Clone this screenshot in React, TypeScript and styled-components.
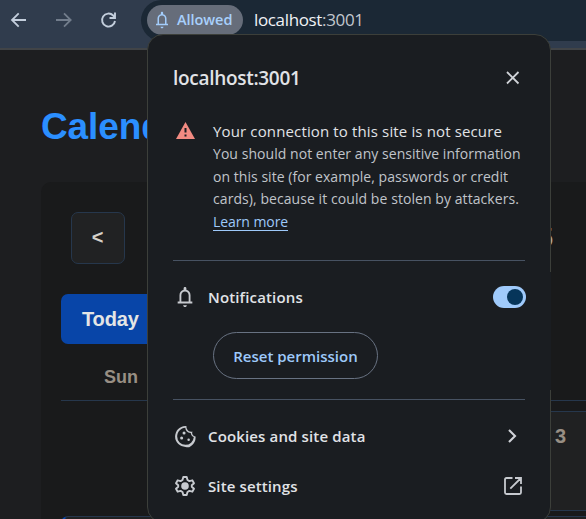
import React from "react";
import styled, { createGlobalStyle } from "styled-components";

const Global = createGlobalStyle`
  * { box-sizing: border-box; }
  body { margin: 0; background: #1d1e20; overflow: hidden; }
`;

const ui = `"Open Sans", "Noto Sans", sans-serif`;
const arial = `"Liberation Sans", Arial, sans-serif`;

const Screen = styled.div`
  position: relative;
  width: 586px;
  height: 519px;
  overflow: hidden;
  background: #1d1e20;
`;

const Toolbar = styled.header`
  display: flex;
  height: 50px;
  background: #303c4d;
  border-bottom: 2px solid #414447;
`;

const NavIcons = styled.div`
  display: flex;
  align-items: center;
  gap: 25px;
  width: 141px;
  height: 39px;
  padding-left: 8px;
`;

const AddressBar = styled.div`
  display: flex;
  align-items: flex-start;
  flex: 1;
  height: 41px;
  padding: 5px 0 0 6px;
  background: #1b2835;
  border-radius: 21px 0 0 21px;
`;

const Chip = styled.div`
  display: flex;
  align-items: center;
  gap: 6px;
  width: 96px;
  height: 30px;
  padding-left: 6px;
  border-radius: 15px;
  background: #666d7a;
  color: #a3cdfb;
`;

const Label = styled.span<{ $size: number; $weight?: number; $spacing?: number; $color?: string }>`
  font-family: ${ui};
  font-size: ${(p) => p.$size}px;
  font-weight: ${(p) => p.$weight ?? 400};
  letter-spacing: ${(p) => p.$spacing ?? 0}px;
  color: ${(p) => p.$color ?? "#e1e3e7"};
  line-height: 24px;
  white-space: nowrap;
`;

const Address = styled(Label)`
  margin: 3px 0 0 11px;
`;

const Port = styled.span`
  color: #c2c7ce;
`;

const Page = styled.main`
  padding: 51px 0 0 41px;
  font-family: ${arial};
`;

const Heading = styled.h1`
  margin: 0;
  height: 81px;
  color: #2b8fff;
  font-size: 37px;
  line-height: 51px;
  letter-spacing: -0.1px;
`;

const Card = styled.section`
  width: 920px;
  height: 600px;
  padding: 30px 20px;
  border-radius: 10px;
  background: #191a1b;
`;

const MonthBar = styled.div`
  display: flex;
  align-items: center;
  justify-content: space-between;
  width: 492px;
  height: 52px;
  padding-left: 10px;
`;

const Previous = styled.button`
  width: 54px;
  height: 52px;
  padding: 0 1px 2px 0;
  border: 1px solid #26374c;
  border-radius: 7px;
  background: #212223;
  color: #d5d1c9;
  font: bold 20px ${arial};
`;

const Month = styled.span`
  color: #aaa69f;
  font-size: 28px;
  font-weight: bold;
`;

const Today = styled.button`
  display: block;
  width: 120px;
  height: 50px;
  margin-top: 30px;
  padding: 0 0 0 21px;
  border: 0;
  border-radius: 7px;
  background: #0845a8;
  color: #e4e5e5;
  font: bold 20px ${arial};
  letter-spacing: -0.15px;
  text-align: left;
`;

const Week = styled.div`
  display: grid;
  grid-template-columns: repeat(7, 116px);
  column-gap: 5px;
`;

const WeekHeader = styled(Week)`
  width: 880px;
  height: 57px;
  margin-bottom: 10px;
  border-bottom: 1px solid #26374c;
`;

const WeekDay = styled.div`
  padding: 22px 0 0 4px;
  color: #988f84;
  font-size: 18px;
  font-weight: bold;
  line-height: 22px;
  text-align: center;
`;

const Day = styled.div<{ $empty?: boolean; $start?: boolean }>`
  height: 100px;
  margin-bottom: 5px;
  padding: 12px 9px;
  border: 1px solid ${(p) => (p.$empty ? "transparent" : "#26374c")};
  ${(p) => p.$start && "border-top-left-radius: 7px; border-left: 3px solid #0845a8;"}
  background: ${(p) => (p.$empty ? "transparent" : "#202122")};
  color: #988f84;
  font-size: 20px;
  font-weight: bold;
  line-height: 24px;
`;

const Popup = styled.aside`
  position: absolute;
  left: 147px;
  top: 34px;
  width: 404px;
  height: 489px;
  padding: 0 25px;
  border: 1px solid #3c3f3a;
  border-radius: 16px;
  background: #1a1d21;

  &::after {
    content: "";
    position: absolute;
    top: 237px;
    right: -1px;
    width: 1px;
    height: 118px;
    background: #1a1d21;
  }
`;

const PopupHeader = styled.div`
  display: flex;
  align-items: center;
  justify-content: space-between;
  height: 86px;
  padding-right: 2px;
`;

const Warning = styled.div`
  display: flex;
  gap: 16px;
  height: 139px;
`;

const WarningIcon = styled.div`
  width: 24px;
  padding: 0 2px;
`;

const WarningText = styled.div`
  display: flex;
  flex-direction: column;
`;

const WarningTitle = styled(Label)`
  height: 22px;
  line-height: 21px;
`;

const BodyLine = styled(Label)`
  height: 22.67px;
  line-height: 22px;
`;

const Link = styled.a`
  align-self: flex-start;
  margin-top: 3px;
  border-bottom: 1px solid #9ec9fa;
  color: #9ec9fa;
  font: 14px/16px ${ui};
  letter-spacing: -0.08px;
  height: 17px;
`;

const Divider = styled.hr`
  height: 1px;
  margin: 0;
  border: 0;
  background: #475262;
`;

const Row = styled.div<{ $height: number }>`
  display: flex;
  align-items: center;
  height: ${(p) => p.$height}px;
`;

const RowIcon = styled.div`
  display: flex;
  justify-content: center;
  width: 25px;
  margin: 0 10.5px 0 -0.5px;
  color: #c7cacf;
`;

const RowEnd = styled.div<{ $inset?: number }>`
  display: flex;
  margin-left: auto;
  margin-right: ${(p) => p.$inset ?? 0}px;
`;

const Switch = styled.div`
  display: flex;
  align-items: center;
  justify-content: flex-end;
  width: 33px;
  height: 22px;
  padding: 3px;
  border-radius: 11px;
  background: #9fcafb;
`;

const Knob = styled.div`
  width: 16px;
  height: 16px;
  border-radius: 8px;
  background: #06355a;
`;

const Reset = styled.button`
  display: flex;
  align-items: center;
  justify-content: center;
  width: 165px;
  height: 47px;
  margin: -1px 0 20px 40px;
  padding: 0;
  border: 1px solid #687282;
  border-radius: 24px;
  background: transparent;
`;

const Bell = ({ size }: { size: number }) => (
  <svg width={size} height={size} viewBox="0 0 24 24" fill="currentColor">
    <path d="M4 19v-2h2v-7c0-2.8 1.7-5.1 4.5-5.8V2.5c0-1.8 3-1.8 3 0v1.7C16.3 4.9 18 7.2 18 10v7h2v2H4zm8 4c-1.1 0-2-.9-2-2h4c0 1.100-.9 2-2 2zM8 17h8v-7c0-2.300-1.700-4-4-4s-4 1.700-4 4v7z" />
  </svg>
);

const Arrow = ({ color, forward }: { color: string; forward?: boolean }) => (
  <svg width="20" height="20" viewBox="0 0 20 20" fill="none" stroke={color} strokeWidth="1.8">
    <path d={forward ? "M3 10h14M11 3.300 17.700 10 11 16.700" : "M18 10H4M10.700 3.300 4 10l6.700 6.700"} />
  </svg>
);

const Reload = () => (
  <svg width="20" height="20" viewBox="0 0 20 20" fill="none" stroke="#c3cedc" strokeWidth="1.900">
    <path d="M17 11a6.500 6.500 0 1 1-1.800-5.500L17 7.500M17 2.500V8h-5.500" />
  </svg>
);

const Close = () => (
  <svg width="20" height="20" viewBox="0 0 20 20" fill="none" stroke="#d0d3d8" strokeWidth="1.800">
    <path d="m4 4 11.500 11.500M15.500 4 4 15.500" />
  </svg>
);

const Triangle = () => (
  <svg width="20" height="20" viewBox="0 0 20 20">
    <path d="M10.500 1 20 18H1z" fill="#f28b82" />
    <path d="M9.500 7h2v4.500h-2zM9.500 13.500h2v2h-2z" fill="#1a1d21" />
  </svg>
);

const Cookie = () => (
  <svg width="25" height="25" viewBox="0 0 24 24" fill="currentColor">
    <path d="M12 22q-2.080 0-3.900-.79a10.100 10.100 0 0 1-3.180-2.140 10.100 10.100 0 0 1-2.130-3.170A9.700 9.700 0 0 1 2 12q0-1.880.73-3.670a10 10 0 0 1 2.030-3.200 10.300 10.300 0 0 1 3.140-2.260A9.400 9.400 0 0 1 11.930 2q.52 0 1.070.05-.2 1.250.2 2.360.4 1.120 1.200 1.860.8.750 1.910 1.040 1.110.3 2.340-.06-.73 1.650.21 3.160.94 1.520 2.790 1.560.02.280.04.510.01.240.010.500 0 2.050-.79 3.860a10.300 10.300 0 0 1-2.140 3.190 10.100 10.100 0 0 1-3.170 2.180A9.600 9.600 0 0 1 12 22zm0-2q3.050 0 5.400-2.100t2.600-5.350a4.400 4.400 0 0 1-2.060-1.560 4.600 4.600 0 0 1-.890-2.440 4.800 4.800 0 0 1-3.950-1.680 5.300 5.300 0 0 1-1.300-3.320C7.400 3.600 4 7.700 4 12q0 3.325 2.340 5.660T12 20z" />
    <circle cx="10.600" cy="8.700" r="1.450" /><circle cx="8.300" cy="13.500" r="1.450" /><circle cx="15" cy="15" r="1.200" />
  </svg>
);

const Gear = () => (
  <svg width="24" height="24" viewBox="0 0 24 24" fill="none" stroke="currentColor" strokeWidth="1.900" strokeLinejoin="round">
    <path d="m10.300 3-.8 3-1.900 1.100-2.900-.8-1.700 2.900L5.200 11.300v1.400L3 14.800l1.700 2.900 2.900-.8L9.500 18l.8 3h3.400l.8-3 1.900-1.100 2.900.8 1.700-2.900-2.200-2.100v-1.400L21 9.200l-1.700-2.900-2.900.8L14.500 6l-.8-3z" />
    <circle cx="12" cy="12" r="3.800" fill="currentColor" stroke="none" />
  </svg>
);

const Chevron = () => (
  <svg width="20" height="20" viewBox="0 0 20 20" fill="none" stroke="#d0d3d8" strokeWidth="2.100">
    <path d="m7 4 6 6-6 6" />
  </svg>
);

const External = () => (
  <svg width="20" height="20" viewBox="0 0 20 20" fill="none" stroke="#c7cacf" strokeWidth="1.800">
    <path d="M9.500 2H3.500Q2 2 2 3.500v13Q2 18 3.500 18h13q1.500 0 1.500-1.500v-6M12 2h6v6M18 2 7.300 12.700" />
  </svg>
);

const lines = [
  { text: "You should not enter any sensitive information", spacing: 0.05 },
  { text: "on this site (for example, passwords or credit", spacing: 0.04 },
  { text: "cards), because it could be stolen by attackers.", spacing: 0.07 },
];

export default function App() {
  return (
    <Screen>
      <Global />
      <Toolbar>
        <NavIcons>
          <Arrow color="#c3cedc" />
          <Arrow color="#727d8c" forward />
          <Reload />
        </NavIcons>
        <AddressBar>
          <Chip>
            <Bell size={18} />
            <Label $size={14.5} $weight={600} $spacing={-0.05} $color="#a8d0fc">Allowed</Label>
          </Chip>
          <Address $size={17} $spacing={-0.35} $color="#f0f2f5">localhost<Port>:3001</Port></Address>
        </AddressBar>
      </Toolbar>
      <Page>
        <Heading>Calendar</Heading>
        <Card>
          <MonthBar>
            <Previous>&lt;</Previous>
            <Month>2025</Month>
          </MonthBar>
          <Today>Today</Today>
          <WeekHeader>
            <WeekDay>Sun</WeekDay>
          </WeekHeader>
          <Week>
            <Day $empty /><Day $empty /><Day /><Day /><Day>3</Day>
          </Week>
          <Week>
            <Day $start /><Day /><Day /><Day /><Day />
          </Week>
        </Card>
      </Page>
      <Popup>
        <PopupHeader>
          <Label $size={19} $weight={600} $spacing={-0.3}>localhost:3001</Label>
          <Close />
        </PopupHeader>
        <Warning>
          <WarningIcon><Triangle /></WarningIcon>
          <WarningText>
            <WarningTitle $size={15} $spacing={0.14}>Your connection to this site is not secure</WarningTitle>
            {lines.map((line) => (
              <BodyLine key={line.text} $size={14} $spacing={line.spacing} $color="#c0c4ca">{line.text}</BodyLine>
            ))}
            <Link>Learn more</Link>
          </WarningText>
        </Warning>
        <Divider />
        <Row $height={72}>
          <RowIcon><Bell size={22} /></RowIcon>
          <Label $size={15} $weight={600} $spacing={0.15}>Notifications</Label>
          <RowEnd $inset={-1}><Switch><Knob /></Switch></RowEnd>
        </Row>
        <Reset><Label $size={15} $weight={600} $color="#9ec9fa">Reset permission</Label></Reset>
        <Divider />
        <Row $height={72}>
          <RowIcon><Cookie /></RowIcon>
          <Label $size={15} $weight={600} $spacing={0.14}>Cookies and site data</Label>
          <RowEnd $inset={3}><Chevron /></RowEnd>
        </Row>
        <Row $height={28}>
          <RowIcon><Gear /></RowIcon>
          <Label $size={15} $weight={600} $spacing={0.12}>Site settings</Label>
          <RowEnd $inset={2.500}><External /></RowEnd>
        </Row>
      </Popup>
    </Screen>
  );
}
